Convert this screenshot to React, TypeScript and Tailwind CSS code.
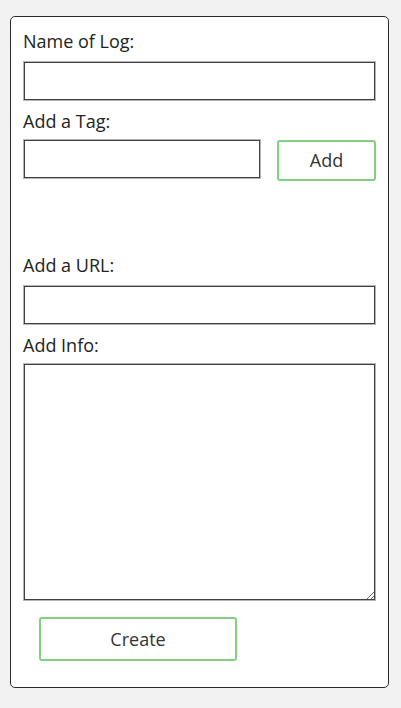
import { useState } from 'react';

const inputClass =
  'block w-full h-[40px] bg-white border border-[#b4b4b4] shadow-[inset_0_0_0_1px_#404040] px-2 text-[16px] outline-none';

export default function App() {
  const [name, setName] = useState('');
  const [tag, setTag] = useState('');
  const [tags, setTags] = useState<string[]>([]);
  const [url, setUrl] = useState('');
  const [info, setInfo] = useState('');

  const addTag = () => {
    if (!tag.trim()) return;
    setTags([...tags, tag.trim()]);
    setTag('');
  };

  return (
    <div
      className="min-h-screen bg-[#f2f2f2] pt-[16px] pl-[10px] text-[#222]"
      style={{ fontFamily: '"Open Sans", "Noto Sans", sans-serif' }}
    >
      <form
        onSubmit={(e) => e.preventDefault()}
        className="w-[379px] bg-white border border-[#2a2a2a] rounded-[5px] px-[12px] pt-[12px] pb-[26px]"
      >
        <label className="block text-[18px] leading-[24px] mb-[8px]">Name of Log:</label>
        <input className={inputClass} value={name} onChange={(e) => setName(e.target.value)} />

        <label className="block text-[18px] leading-[24px] mt-[8px] mb-[6px]">Add a Tag:</label>
        <div className="flex items-start h-[114px]">
          <input
            className="block w-[238px] h-[40px] bg-white border border-[#b4b4b4] shadow-[inset_0_0_0_1px_#404040] px-2 text-[16px] outline-none"
            value={tag}
            onChange={(e) => setTag(e.target.value)}
          />
          <button
            type="button"
            onClick={addTag}
            className="ml-[16px] mt-[1px] w-[99px] h-[41px] border-2 border-[#80d080] rounded-[3px] bg-white text-[18px] text-[#333]"
          >
            Add
          </button>
        </div>

        <label className="block text-[18px] leading-[24px] mb-[8px]">Add a URL:</label>
        <input className={inputClass} value={url} onChange={(e) => setUrl(e.target.value)} />

        <label className="block text-[18px] leading-[24px] mt-[8px] mb-[6px]">Add Info:</label>
        <textarea
          className="block w-full h-[238px] bg-white border border-[#b4b4b4] shadow-[inset_0_0_0_1px_#404040] p-2 text-[16px] outline-none"
          value={info}
          onChange={(e) => setInfo(e.target.value)}
        />

        <button
          type="submit"
          className="block mt-[16px] ml-[16px] w-[198px] h-[44px] border-2 border-[#80d080] rounded-[3px] bg-white text-[18px] text-[#333]"
        >
          Create
        </button>
      </form>
    </div>
  );
}
